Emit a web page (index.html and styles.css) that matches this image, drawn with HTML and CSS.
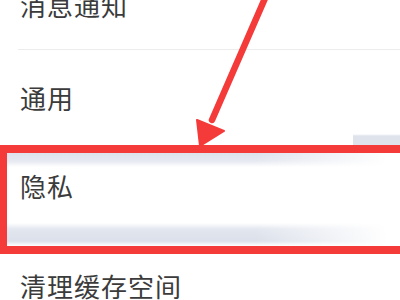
FILE: index.html
```html
<!DOCTYPE html>
<html lang="zh">
<head>
<meta charset="utf-8">
<link rel="stylesheet" href="styles.css">
</head>
<body>
<div class="screen">
  <div class="list">
    <div class="row row-first"><span class="label">消息通知</span></div>
    <div class="row row-general"><span class="label">通用</span></div>
    <div class="row row-privacy"><span class="label">隐私</span></div>
    <div class="row row-cache"><span class="label">清理缓存空间</span></div>
  </div>
  <svg class="arrow" width="400" height="300" viewBox="0 0 400 300">
    <line x1="266" y1="-4" x2="212" y2="120" stroke="#f53a3a" stroke-width="6.5" stroke-linecap="round"/>
    <polygon points="200,146 197,120 224,131" fill="#f53a3a" stroke="#f53a3a" stroke-width="2" stroke-linejoin="round"/>
  </svg>
</div>
</body>
</html>
```

FILE: styles.css
```css
html, body {
  margin: 0;
  padding: 0;
  background: #ffffff;
}
.screen {
  position: relative;
  width: 400px;
  height: 300px;
  overflow: hidden;
  background: #ffffff;
}
.list {
  display: flex;
  flex-direction: column;
}
.row {
  display: flex;
  align-items: center;
  box-sizing: border-box;
  padding-left: 20px;
}
.label {
  font-family: "Noto Sans CJK SC", "Noto Sans", sans-serif;
  font-size: 26px;
  color: #3b3b3b;
  letter-spacing: 1px;
  line-height: 1;
}
.row-first {
  height: 90px;
  margin-top: -40px;
  position: relative;
}
.row-first::after {
  content: "";
  position: absolute;
  left: 18px;
  right: 0;
  bottom: 0;
  height: 1px;
  background: #ececec;
}
.row-general {
  height: 95px;
  padding-top: 0;
  background:
    linear-gradient(to bottom, rgba(255,255,255,0) 84px, #dfe3ec 86px, #dfe3ec 95px) no-repeat 353px 0 / 47px 95px;
}
.row-privacy {
  height: 109px;
  border-top: 8px solid #f53a3a;
  border-bottom: 8px solid #f53a3a;
  border-left: 7px solid #f53a3a;
  padding-left: 13px;
  padding-bottom: 27px;
  margin-right: -20px;
  background:
    linear-gradient(to right, rgba(255,255,255,0) 0, rgba(255,255,255,0) 60%, rgba(255,255,255,1) 92%) ,
    linear-gradient(to bottom, #dde2ec 0, #e6e9f1 8px, #ffffff 14px, #ffffff 70px, #e3e7ef 76px, #dbe0ea 88px, #ffffff 93px);
}
.row-cache {
  height: 62px;
  padding-top: 2px;
}
.arrow {
  position: absolute;
  left: 0;
  top: 0;
}
```
